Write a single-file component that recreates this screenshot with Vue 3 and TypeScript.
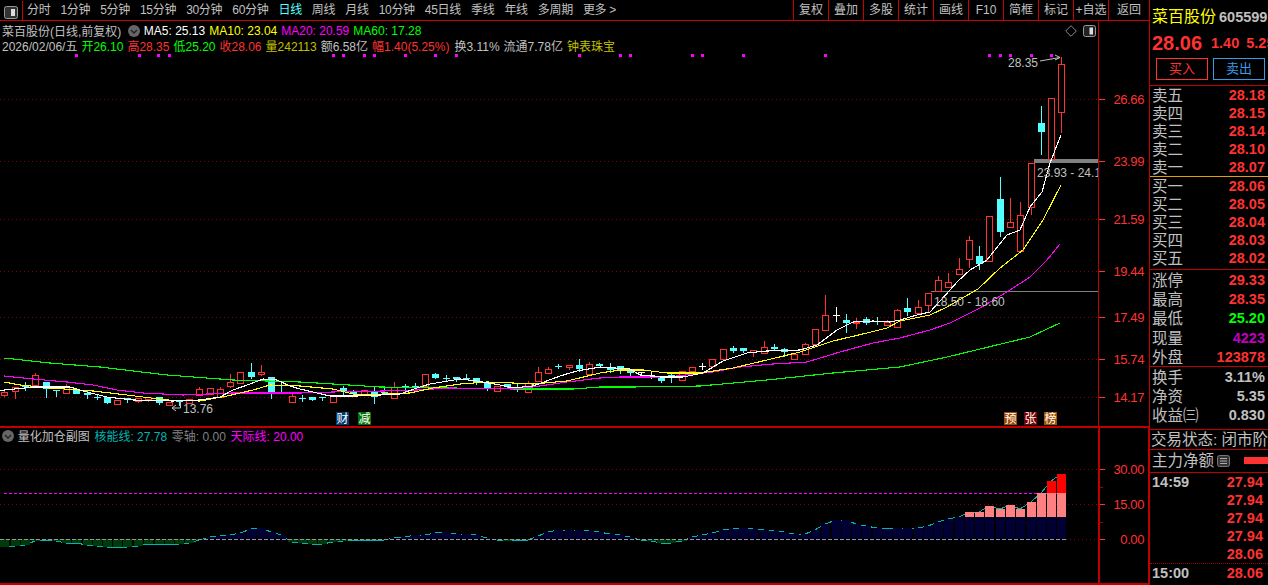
<script setup lang="ts">
type Kind = 'r' | 'c' | 'w'
type Candle = [number, number, number, number, number, Kind]

const tabs = ['分时', '1分钟', '5分钟', '15分钟', '30分钟', '60分钟', '日线', '周线', '月线', '10分钟', '45日线', '季线', '年线', '多周期', '更多 >']
const tools = ['复权', '叠加', '多股', '统计', '画线', 'F10', '简框', '标记', '+自选', '返回']

const candles: Candle[] = [
  [4,392,395,390,397,'r'],[15,387,391,387,399,'r'],[25,386,387,382,391,'c'],[35,375,385,373,385,'r'],
  [46,382,389,382,398,'c'],[56,390,391,390,397,'c'],[66,387,393,384,393,'r'],[76,389,394,389,394,'c'],
  [87,393,395,390,399,'c'],[97,397,398,395,400,'c'],[107,397,403,397,404,'c'],[117,400,404,400,404,'r'],
  [127,398,400,398,403,'c'],[138,398,401,398,403,'r'],[148,397,399,397,402,'r'],[159,397,403,397,405,'c'],
  [169,402,405,402,405,'r'],[179,401,402,401,406,'c'],[189,399,403,399,403,'r'],[199,389,395,387,395,'r'],
  [210,388,394,388,394,'r'],[220,389,397,387,397,'r'],[230,382,386,374,388,'r'],[240,372,383,372,383,'r'],
  [251,372,377,363,379,'c'],[261,372,374,365,376,'r'],[271,377,393,377,399,'c'],[281,392,393,383,393,'c'],
  [292,396,402,393,403,'r'],[302,398,399,395,402,'c'],[312,397,400,397,401,'c'],[322,397,398,397,401,'c'],
  [333,395,402,395,402,'r'],[343,388,392,386,395,'c'],[353,392,394,390,397,'c'],[364,390,395,390,395,'r'],
  [374,392,397,387,404,'c'],[384,392,393,388,395,'c'],[394,387,398,382,398,'r'],[405,386,387,384,390,'c'],
  [415,386,387,383,388,'c'],[425,374,386,374,386,'r'],[435,374,378,373,379,'c'],[446,378,379,375,381,'c'],
  [456,377,379,377,382,'c'],[466,378,379,374,380,'c'],[476,378,383,378,385,'c'],[487,383,389,383,391,'c'],
  [497,386,391,386,391,'r'],[507,384,387,384,388,'c'],[517,388,389,383,392,'c'],[528,383,392,381,393,'r'],
  [538,372,381,367,381,'r'],[548,369,373,367,373,'r'],[558,366,367,364,369,'c'],[569,365,367,365,370,'r'],
  [579,365,369,359,372,'c'],[589,364,374,362,374,'r'],[599,364,366,363,366,'c'],[610,368,370,363,373,'c'],
  [620,366,371,366,374,'c'],[630,369,373,369,376,'c'],[641,372,373,372,378,'w'],[651,375,376,372,379,'w'],
  [661,377,381,377,383,'c'],[671,375,376,374,383,'c'],[682,371,380,371,380,'r'],[692,367,371,367,372,'r'],
  [702,366,367,363,370,'w'],[712,359,366,359,366,'r'],[723,349,359,349,359,'r'],[733,348,351,346,353,'c'],
  [743,348,351,348,353,'c'],[753,350,352,350,357,'r'],[764,347,353,341,353,'r'],[774,347,349,344,350,'c'],
  [784,349,352,348,357,'c'],[794,354,359,353,359,'r'],[805,344,354,343,354,'r'],[815,329,344,329,344,'r'],
  [825,315,330,295,330,'r'],[836,315,316,307,322,'w'],[846,320,323,314,333,'c'],[856,322,323,318,329,'r'],
  [866,319,323,317,325,'c'],[877,321,322,317,325,'c'],[887,322,325,320,325,'r'],[897,310,327,309,327,'r'],
  [907,308,312,298,316,'c'],[918,307,313,300,313,'r'],[928,293,305,293,313,'r'],[938,280,291,276,291,'r'],
  [948,282,287,273,288,'r'],[959,269,274,258,274,'r'],[969,240,259,236,268,'r'],[979,256,264,246,270,'c'],
  [989,216,261,216,261,'r'],[1000,199,232,177,237,'c'],[1010,222,227,198,227,'r'],[1020,215,251,202,251,'r'],
  [1031,163,207,163,215,'r'],[1041,123,132,106,155,'c'],[1051,98,159,98,159,'r'],[1061,64,112,57,133,'r'],
]

const pts = (list: number[][]) => list.map(p => p.join(',')).join(' ')

const ma5 = pts([[0,391],[4,390],[25,388],[33,387],[70,387],[87,392],[107,397],[133,400],[173,401],[200,400],[220,397],[233,390],[250,384],[263,379],[277,380],[290,386],[300,389],[330,396],[357,396],[380,395],[400,394],[417,388],[430,384],[460,379],[477,381],[500,385],[513,388],[533,386],[560,376],[577,371],[600,367],[630,369],[640,375],[660,377],[683,377],[703,373],[723,361],[747,353],[767,351],[800,350],[817,345],[837,330],[853,322],[873,321],[890,322],[900,320],[917,315],[930,312],[950,290],[957,282],[970,270],[987,260],[1007,235],[1020,230],[1030,207],[1042,192],[1050,163],[1061,135]])
const ma10 = pts([[4,382],[20,385],[50,388],[93,391],[127,395],[167,400],[200,401],[227,396],[253,390],[270,385],[300,386],[333,389],[357,395],[410,393],[433,388],[460,384],[487,382],[513,383],[533,384],[567,381],[600,373],[620,370],[643,370],[667,373],[700,373],[733,368],[767,360],[800,352],[833,341],[867,333],[887,328],[900,321],[930,315],[947,307],[978,289],[1000,268],[1023,250],[1043,220],[1061,185]])
const ma20 = pts([[4,376],[33,379],[67,382],[93,385],[117,390],[143,393],[183,395],[233,393],[300,393],[333,392],[383,391],[417,390],[450,388],[513,389],[533,387],[567,382],[600,378],[620,377],[667,377],[713,372],[740,367],[773,364],[807,362],[840,352],[873,343],[900,338],[930,330],[950,323],[980,308],[1007,292],[1030,277],[1047,260],[1060,244]])
const ma60 = pts([[4,358],[50,363],[100,367],[167,375],[233,380],[300,382],[333,384],[380,387],[453,388],[513,389],[573,389],[600,387],[633,387],[700,386],[767,380],[833,373],[900,367],[947,357],[1030,337],[1060,323]])

const levels = [
  { y: 99, label: '26.66' }, { y: 161, label: '23.99' }, { y: 219, label: '21.59' }, { y: 271, label: '19.44' },
  { y: 317, label: '17.49' }, { y: 359, label: '15.74' }, { y: 397, label: '14.17' },
]
const subLevels = [
  { y: 469, label: '30.00' }, { y: 504, label: '15.00' }, { y: 539, label: '0.00' },
]
const dots = [75,138,157,168,332,342,363,373,404,434,455,578,619,629,691,701,742,824,988,999,1009,1030,1050]

const energy: number[][] = [
  [4,-8],[15,-7],[25,-6],[35,-2],[46,-1],[56,-2],[66,-4],[76,-4],[87,-6],[97,-7],[107,-8],[117,-8],[127,-8],[138,-7],[148,-5],[159,-5],[169,-5],[179,-5],[189,-4],[199,-1],
  [210,2],[220,3],[230,4],[240,6],[251,10],[261,11],[271,7],[281,4],[292,-3],[302,-4],[312,-5],[322,-5],[333,-3],[343,-2],[353,-1],[364,-1],[374,-1],[384,-1],[394,1],
  [405,2],[415,4],[425,4],[435,6],[446,7],[456,5],[466,5],[476,4],[487,1],[497,-1],[507,-2],[517,-1],[528,-1],[538,3],[548,7],[558,9],[569,9],[579,9],[589,8],[599,7],
  [610,5],[620,4],[630,2],[641,-1],[651,-2],[661,-4],[671,-4],[682,-2],[692,2],[702,4],[712,6],[723,9],[733,10],[743,11],[753,10],[764,9],[774,8],[784,7],[794,5],[805,5],
  [815,9],[825,15],[836,19],[846,19],[856,15],[866,13],[877,11],[887,10],[897,11],[907,11],[918,11],[928,13],[938,17],[948,20],[959,22],[969,27],[979,27],[989,33],
  [1000,30],[1010,34],[1020,30],[1031,37],[1041,46],[1051,58],[1061,65],
]
const energyLine = pts(energy.map(([x, h]) => [x, 539 - h]))
const bars = energy.map(([x, h]) => ({
  x: x - 4, h,
  navy: h > 0 ? Math.min(h, 22) : 0,
  pink: Math.max(Math.min(h, 46) - 22, 0),
  red: Math.max(h - 46, 0),
}))

const sells = [['卖五','28.18'],['卖四','28.15'],['卖三','28.14'],['卖二','28.10'],['卖一','28.07']]
const buys = [['买一','28.06'],['买二','28.05'],['买三','28.04'],['买四','28.03'],['买五','28.02']]
const trades = [['14:59','27.94'],['','27.94'],['','27.94'],['','27.94'],['','28.06']]
</script>

<template>
  <div class="app">
    <div class="left">
      <header class="toolbar">
        <span class="switch"><svg width="14" height="13" viewBox="0 0 14 13"><rect x="0.5" y="0.5" width="13" height="12" rx="2" fill="#333" stroke="#999" /><rect x="7" y="3" width="4" height="7" fill="#ddd" /></svg></span>
        <nav class="tabs">
          <span v-for="t in tabs" :key="t" :class="{ on: t === '日线' }">{{ t }}</span>
        </nav>
        <nav class="tools">
          <span v-for="t in tools" :key="t">{{ t }}</span>
        </nav>
      </header>

      <section class="pane main-pane">
        <div class="legend">
          <div class="line">
            <span class="gray title">菜百股份(日线,前复权)</span>
            <svg class="round" width="12" height="12" viewBox="0 0 12 12"><circle cx="6" cy="6" r="6" fill="#666" /><path d="M3 5l3 3 3-3" fill="none" stroke="#222" stroke-width="1.4" /></svg>
            <span class="white">MA5: 25.13</span>
            <span class="yellow">MA10: 23.04</span>
            <span class="magenta">MA20: 20.59</span>
            <span class="green">MA60: 17.28</span>
          </div>
          <div class="line">
            <span class="gray">2026/02/06/五</span>
            <span class="green">开26.10</span>
            <span class="red">高28.35</span>
            <span class="green">低25.20</span>
            <span class="red">收28.06</span>
            <span class="olive">量242113</span>
            <span class="gray">额6.58亿</span>
            <span class="red pct">幅1.40(5.25%)</span>
            <span class="gray">换3.11%</span>
            <span class="gray">流通7.78亿</span>
            <span class="olive">钟表珠宝</span>
          </div>
        </div>
        <div class="corner">
          <svg width="12" height="12" viewBox="0 0 12 12"><path d="M6 .7 11.3 6 6 11.3.7 6z" fill="none" stroke="#888" /></svg>
          <svg width="13" height="12" viewBox="0 0 13 12"><rect x="0.5" y="0.5" width="12" height="11" rx="2" fill="#222" stroke="#999" /><rect x="6.5" y="2.5" width="3.5" height="7" fill="#ddd" /></svg>
        </div>
        <svg class="plot" width="1098" height="405" viewBox="0 21 1098 405">
          <line v-for="l in levels" :key="l.y" x1="0" :y1="l.y + 0.5" x2="1098" :y2="l.y + 0.5" class="grid" />
          <rect v-for="d in dots" :key="d" :x="d" y="54" width="3" height="3" fill="#ff00ff" />
          <rect x="1034" y="159" width="64" height="4" fill="#808080" />
          <rect x="931" y="291" width="167" height="1" fill="#808080" />
          <g v-for="c in candles" :key="c[0]" shape-rendering="crispEdges">
            <template v-if="c[5] === 'r'">
              <line :x1="c[0] + 0.5" :y1="c[3]" :x2="c[0] + 0.5" :y2="c[1]" stroke="#ff3232" />
              <line :x1="c[0] + 0.5" :y1="c[2]" :x2="c[0] + 0.5" :y2="c[4]" stroke="#ff3232" />
              <rect :x="c[0] - 2.5" :y="c[1] + 0.5" width="6" :height="c[2] - c[1]" fill="#000" stroke="#ff3232" />
            </template>
            <template v-else>
              <line :x1="c[0] + 0.5" :y1="c[3]" :x2="c[0] + 0.5" :y2="c[4]" :stroke="c[5] === 'c' ? '#54ffff' : '#fff'" />
              <rect :x="c[0] - 3" :y="c[1]" width="7" :height="Math.max(c[2] - c[1], 1)" :fill="c[5] === 'c' ? '#54ffff' : '#fff'" />
            </template>
          </g>
          <g fill="none" shape-rendering="crispEdges" stroke-width="1.1">
            <polyline :points="ma60" stroke="#00ff00" />
            <polyline :points="ma20" stroke="#ff00ff" />
            <polyline :points="ma10" stroke="#ffff00" />
            <polyline :points="ma5" stroke="#ffffff" />
          </g>
          <g class="note">
            <text x="1008" y="67">28.35</text>
            <path d="M1040 61l20-3.500M1055 55l5 2.500-5 2.500" fill="none" stroke="#c0c0c0" />
            <text x="183" y="413">13.76</text>
            <path d="M180.500 401v7H172M176 405l-4 3 4 3" fill="none" stroke="#c0c0c0" />
            <text x="1037" y="177">23.93 - 24.18</text>
            <text x="934" y="306">18.50 - 18.60</text>
          </g>
          <g class="badge">
            <rect x="336" y="412" width="13" height="13" fill="#003a70" /><text x="336.500" y="423">财</text>
            <rect x="358" y="412" width="13" height="13" fill="#007000" /><text x="358.500" y="423">减</text>
            <rect x="1004" y="412" width="13" height="13" fill="#a04800" /><text x="1004.500" y="423">预</text>
            <rect x="1024" y="412" width="13" height="13" fill="#7a0000" /><text x="1024.500" y="423">张</text>
            <rect x="1044" y="412" width="13" height="13" fill="#a05000" /><text x="1044.500" y="423">榜</text>
          </g>
        </svg>
        <svg class="axis" width="50" height="405" viewBox="1099 21 50 405">
          <g v-for="l in levels" :key="l.y">
            <line x1="1099" :y1="l.y + 0.5" x2="1105" :y2="l.y + 0.5" stroke="#ff3232" />
            <text x="1144" :y="l.y + 5" text-anchor="end">{{ l.label }}</text>
          </g>
        </svg>
      </section>

      <section class="pane sub-pane">
        <div class="legend sub-legend">
          <div class="line">
            <svg class="round" width="12" height="12" viewBox="0 0 12 12"><circle cx="6" cy="6" r="6" fill="#666" /><path d="M3 5l3 3 3-3" fill="none" stroke="#222" stroke-width="1.4" /></svg>
            <span class="gray">量化加仓副图</span>
            <span class="teal">核能线: 27.78</span>
            <span class="dim">零轴: 0.00</span>
            <span class="magenta">天际线: 20.00</span>
          </div>
        </div>
        <svg class="plot" width="1098" height="155" viewBox="0 428 1098 155">
          <line x1="0" y1="469.500" x2="1098" y2="469.500" class="grid" />
          <line x1="0" y1="504.500" x2="1098" y2="504.500" class="grid" />
          <line x1="1066" y1="539.500" x2="1098" y2="539.500" class="grid" />
          <line x1="4" y1="493.500" x2="1062" y2="493.500" stroke="#ff00ff" stroke-dasharray="3 2" />
          <polyline :points="energyLine" fill="none" stroke="#00b4b4" shape-rendering="crispEdges" />
          <g v-for="b in bars" :key="b.x" shape-rendering="crispEdges">
            <rect v-if="b.h < 0" :x="b.x" y="539" width="9" :height="-b.h" fill="#003a0a" />
            <rect v-if="b.navy" :x="b.x" :y="539 - b.navy" width="9" :height="b.navy" fill="#000033" />
            <rect v-if="b.pink" :x="b.x" :y="517 - b.pink" width="9" :height="b.pink" fill="#ff8080" />
            <rect v-if="b.red" :x="b.x" :y="493 - b.red" width="9" :height="b.red" fill="#ff0000" />
          </g>
          <line x1="0" y1="539.500" x2="1066" y2="539.500" stroke="#999" stroke-dasharray="4 2" />
        </svg>
        <svg class="axis" width="48" height="155" viewBox="1100 428 48 155">
          <g v-for="l in subLevels" :key="l.y">
            <line x1="1100" :y1="l.y + 0.5" x2="1105" :y2="l.y + 0.5" stroke="#ff3232" />
            <text x="1144" :y="l.y + 5" text-anchor="end">{{ l.label }}</text>
          </g>
          <line x1="1100" y1="487.500" x2="1103" y2="487.500" stroke="#a00000" />
          <line x1="1100" y1="522.500" x2="1103" y2="522.500" stroke="#a00000" />
        </svg>
      </section>
    </div>

    <aside class="quote">
      <div class="name"><span class="stock">菜百股份</span><span class="code">605599</span></div>
      <div class="price"><b>28.06</b><span>1.40</span><span>5.25%</span></div>
      <div class="trade"><span class="buy">买入</span><span class="sell">卖出</span></div>
      <div class="book sells"><div v-for="r in sells" :key="r[0]" class="row"><span>{{ r[0] }}</span><b>{{ r[1] }}</b></div></div>
      <div class="book buys"><div v-for="r in buys" :key="r[0]" class="row"><span>{{ r[0] }}</span><b>{{ r[1] }}</b></div></div>
      <div class="stats">
        <div class="row"><span>涨停</span><b>29.33</b></div>
        <div class="row"><span>最高</span><b>28.35</b></div>
        <div class="row"><span>最低</span><b class="up">25.20</b></div>
        <div class="row"><span>现量</span><b class="vol">4223</b></div>
        <div class="row"><span>外盘</span><b>123878</b></div>
      </div>
      <div class="stats finance">
        <div class="row"><span>换手</span><b class="plain">3.11%</b></div>
        <div class="row"><span>净资</span><b class="plain">5.35</b></div>
        <div class="row"><span>收益㈢</span><b class="plain">0.830</b></div>
      </div>
      <div class="state">交易状态: 闭市阶段</div>
      <div class="flow">
        <span>主力净额</span>
        <svg width="13" height="12" viewBox="0 0 13 12"><rect x="0.500" y="0.500" width="12" height="11" rx="2" fill="#333" stroke="#777" /><path d="M3 3.500h7M3 6h7M3 8.500h7" stroke="#aaa" /></svg>
        <i class="flow-bar"></i>
      </div>
      <div class="ticks">
        <div v-for="(r, i) in trades" :key="i" class="row"><b class="plain">{{ r[0] }}</b><b>{{ r[1] }}</b></div>
      </div>
      <div class="ticks close"><div class="row"><b class="plain">15:00</b><b>28.06</b></div></div>
    </aside>
  </div>
</template>

<style>
html, body { margin: 0; background: #000; }
</style>

<style scoped>
.app {
  display: flex;
  width: 1268px;
  height: 585px;
  overflow: hidden;
  background: #000;
  color: #c0c0c0;
  font-family: "Liberation Sans", "Noto Sans CJK SC", sans-serif;
  font-size: 12px;
}
.left { width: 1150px; flex: none; display: flex; flex-direction: column; }
.toolbar {
  height: 20px;
  flex: none;
  display: flex;
  align-items: center;
  border-bottom: 1px solid #c80000;
  border-right: 1px solid #c80000;
  line-height: 20px;
}
.switch {
  width: 23px;
  height: 19px;
  box-sizing: border-box;
  padding: 5px 0 0 4px;
  border-right: 1px solid #c80000;
  flex: none;
}
.switch svg { display: block; }
.tabs { display: flex; gap: 10px; padding-left: 4px; white-space: nowrap; letter-spacing: -0.300px; }
.tabs .on { color: #54ffff; }
.tools { display: flex; margin-left: auto; height: 20px; }
.tools span {
  width: 35px;
  box-sizing: border-box;
  border-left: 1px solid #c80000;
  text-align: center;
  white-space: nowrap;
}
.tools span:last-child { width: 41px; }
.pane { position: relative; display: flex; box-sizing: border-box; }
.main-pane { height: 405px; border-right: 1px solid #c00000; }
.sub-pane {
  height: 159px;
  border-top: 2px solid #c00000;
  border-bottom: 2px solid #c00000;
  border-right: 2px solid #c00000;
}
.plot, .axis { display: block; flex: none; }
.axis { box-sizing: content-box; border-left: 1px solid #c00000; }
.sub-pane .axis { border-left-width: 2px; }
.axis text { fill: #ff3232; font-size: 13px; letter-spacing: -0.4px; }
.grid { stroke: #8b0000; stroke-dasharray: 1 3; }
.note text { fill: #c0c0c0; font-size: 12px; }
.badge text { fill: #fff; font-size: 12px; }
.legend { position: absolute; left: 2px; top: 2px; z-index: 1; }
.sub-legend { top: 0; }
.line { display: flex; gap: 4px; align-items: center; height: 15px; white-space: nowrap; }
.sub-legend .line { gap: 5px; }
.sub-legend .round { margin-right: -1px; }
.sub-legend .line > span { margin-left: -0.300px; }
.title { margin-right: 2.500px; }
.pct { margin-right: 1px; }
.round { flex: none; }
.corner {
  position: absolute;
  left: 1065px;
  top: 4px;
  z-index: 1;
  display: flex;
  gap: 6px;
}
.gray { color: #c0c0c0; }
.white { color: #fff; }
.yellow { color: #ffff00; }
.magenta { color: #ff00ff; }
.green { color: #00ff00; }
.red { color: #ff3232; }
.olive { color: #c0c000; }
.teal { color: #00b4b4; }
.dim { color: #808080; }

.quote { flex: 1; min-width: 0; overflow: hidden; font-size: 15.500px; line-height: 18px; }
.name { height: 33px; display: flex; align-items: center; gap: 3px; padding-left: 2px; white-space: nowrap; }
.stock { color: #ffff00; font-size: 16px; }
.code { font-weight: 700; font-size: 14.500px; }
.price { height: 20px; display: flex; align-items: center; padding-left: 2px; color: #ff3232; font-weight: 700; font-size: 14.500px; white-space: nowrap; }
.price b { font-size: 20px; width: 59px; flex: none; }
.price span:last-child { margin-left: 7px; }
.trade { display: flex; gap: 5px; padding: 5px 0 0 6px; height: 32px; box-sizing: border-box; }
.trade span {
  width: 52px;
  height: 22px;
  box-sizing: border-box;
  border: 1px solid;
  text-align: center;
  font-size: 13px;
  line-height: 20px;
}
.buy { color: #ff3232; border-color: #ff3232; }
.sell { color: #3a9ae8; border-color: #3a9ae8; }
.row { display: flex; justify-content: space-between; align-items: center; padding: 0 3px 0 2px; white-space: nowrap; }
.row span { margin-top: 2px; }
.row b { color: #ff3232; font-size: 14.500px; }
.row b.up { color: #00ff00; }
.row b.vol { color: #c000c0; }
.row b.plain { color: #c0c0c0; }
.book .row { height: 18px; }
.sells { border-top: 1px solid #c00000; border-bottom: 1px solid #e0a000; }
.buys { border-bottom: 1px solid #c00000; padding-bottom: 2px; }
.stats { border-bottom: 1px solid #c00000; }
.stats .row { height: 19.300px; }
.finance { height: 62.500px; box-sizing: border-box; }
.finance .row { height: 19px; }
.state { height: 20px; box-sizing: border-box; border-bottom: 1px solid #c00000; line-height: 19px; white-space: nowrap; padding-left: 1px; }
.flow { height: 23px; box-sizing: border-box; border-bottom: 1px solid #c00000; display: flex; align-items: center; gap: 3px; padding-left: 2px; }
.flow svg { flex: none; }
.flow-bar { width: 24px; height: 7px; background: #ff3232; margin-left: auto; }
.ticks { border-bottom: 1px dotted #a00000; }
.ticks .row { height: 18px; padding-right: 5px; }
.close { border-bottom: 0; }
</style>
